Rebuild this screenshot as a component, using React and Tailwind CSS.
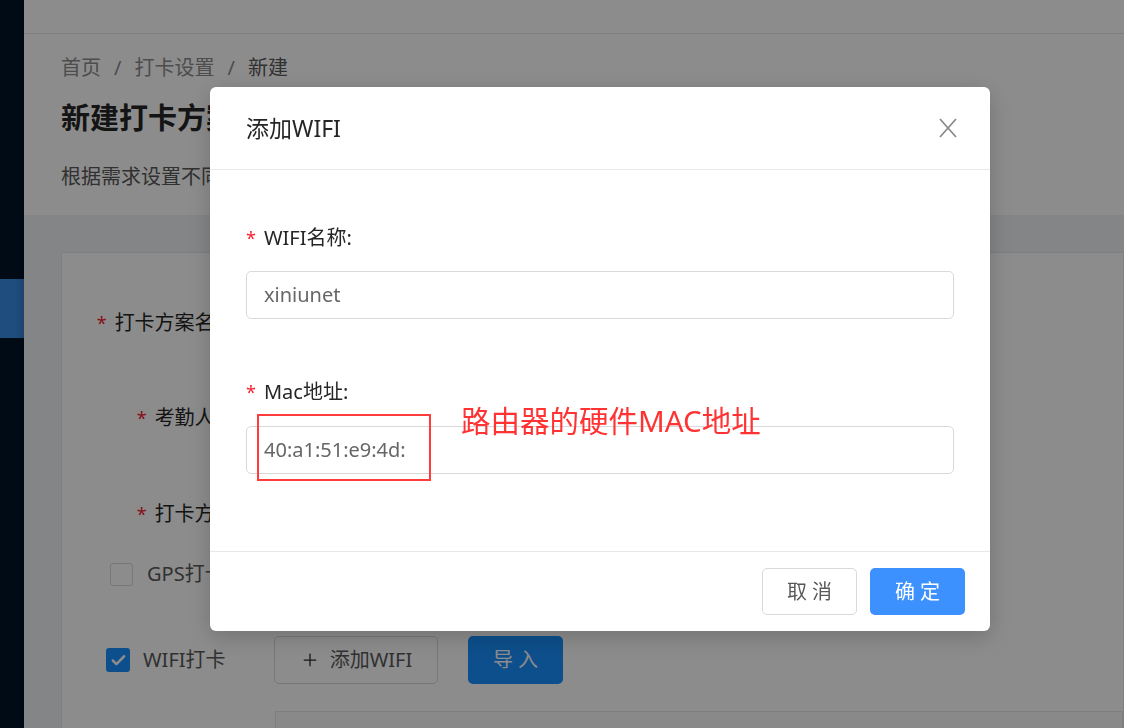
import { Check, Plus } from "lucide-react";

const FONT = { fontFamily: '"Noto Sans", "Noto Sans CJK SC", sans-serif' };

const Req = () => <span className="text-[#f5222d] mr-[8px] text-[18px]">*</span>;

const FormRow = ({ label, height }) => (
  <div className={`flex items-center ${height}`}>
    <div className="w-[182px] text-right text-[20px] text-[#262626] pr-[4px]">
      <Req />
      {label}:
    </div>
    <div className="ml-[26px] w-[600px] h-[48px] border border-[#d9d9d9] rounded-[5px]" />
  </div>
);

const Background = () => (
  <div className="flex h-[728px] overflow-hidden bg-[#f0f2f5]">
    {/* Sidebar */}
    <aside className="w-[24px] shrink-0 bg-[#001529] flex flex-col">
      <div className="h-[279px]" />
      <div className="h-[59px] bg-[#3a8ee6]" />
    </aside>

    <main className="flex-1 flex flex-col shadow-[-4px_0_8px_rgba(0,0,0,0.15)]">
      <header className="h-[34px] bg-white border-b border-[#e8e8e8] shrink-0" />

      <section className="bg-white px-[37px] pt-[20px] pb-[24px] shrink-0">
        <div className="h-[28px] leading-[28px] text-[20px] text-[#8c8c8c] flex gap-[13px]">
          <span>首页</span>
          <span>/</span>
          <span>打卡设置</span>
          <span>/</span>
          <span className="text-[#595959]">新建</span>
        </div>
        <h1 className="mt-[16px] leading-[40px] text-[29px] font-bold text-[#262626]">新建打卡方案</h1>
        <p className="mt-[25px] leading-[28px] text-[20px] text-[#595959]">根据需求设置不同的打卡方案</p>
      </section>

      <section className="pl-[37px] pt-[37px] flex-1">
        <div className="bg-white border border-[#e8e8e8] h-full pt-[56px]">
          <FormRow label="打卡方案名称" height="h-[28px]" />
          <div className="h-[67px]" />
          <FormRow label="考勤人员" height="h-[28px]" />
          <div className="h-[68px]" />
          <FormRow label="打卡方式" height="h-[28px]" />

          <div className="mt-[34px] flex items-center pl-[48px] h-[24px]">
            <span className="w-[23px] h-[23px] border border-[#d9d9d9] rounded-[3px] bg-white" />
            <span className="ml-[14px] text-[20px] text-[#595959]">GPS打卡</span>
          </div>

          <div className="mt-[50px] flex items-center h-[48px] pl-[44px]">
            <span className="w-[24px] h-[24px] rounded-[3px] bg-[#1890ff] flex items-center justify-center">
              <Check size={17} strokeWidth={3.5} className="text-white" />
            </span>
            <span className="ml-[13px] text-[20px] text-[#595959] w-[131px]">WIFI打卡</span>
            <button className="w-[164px] h-[48px] border border-[#d9d9d9] rounded-[5px] flex items-center justify-center gap-[10px] text-[20px] text-[#595959] bg-white">
              <Plus size={20} strokeWidth={1.5} className="text-[#262626]" />
              添加WIFI
            </button>
            <button className="ml-[30px] w-[95px] h-[48px] rounded-[5px] bg-[#1890ff] text-white text-[20px]">导 入</button>
          </div>

          <div className="mt-[27px] ml-[213px] h-[60px] bg-[#fafafa] border border-[#e8e8e8]" />
        </div>
      </section>
    </main>
  </div>
);

const Modal = () => (
  <div className="fixed left-[210px] top-[87px] w-[780px] bg-white rounded-[6px] shadow-[0_6px_24px_rgba(0,0,0,0.2)]">
    <div className="h-[83px] px-[36px] flex items-center justify-between border-b border-[#e8e8e8]">
      <span className="text-[23px] text-[#262626]">添加WIFI</span>
      <svg width="18" height="20" viewBox="0 0 18 20" className="mr-[-3px]">
        <path d="M1 1 L17 19 M17 1 L1 19" stroke="#8c8c8c" strokeWidth="1.8" fill="none" />
      </svg>
    </div>

    <div className="relative px-[36px] pt-[54px] pb-[77px]">
      <div className="h-[28px] flex items-center text-[20px] text-[#262626]">
        <Req />
        WIFI名称:
      </div>
      <div className="mt-[19px] h-[48px] border border-[#d9d9d9] rounded-[5px] flex items-center px-[17px] text-[20px] text-[#666666]">
        xiniunet
      </div>

      <div className="mt-[59px] h-[28px] flex items-center text-[20px] text-[#262626]">
        <Req />
        Mac地址:
      </div>
      <div className="mt-[20px] h-[48px] border border-[#d9d9d9] rounded-[5px] flex items-center px-[17px] text-[20px] text-[#666666]">
        40:a1:51:e9:4d:
      </div>

      {/* annotation */}
      <div className="absolute left-[47px] top-[244px] w-[174px] h-[67px] border-2 border-[#ff3b3b]" />
      <div className="absolute left-[251px] top-[231px] text-[29.5px] leading-[40px] text-[#ff3333]">路由器的硬件MAC地址</div>
    </div>

    <div className="border-t border-[#e8e8e8] py-[16px] px-[25px] flex justify-end gap-[13px]">
      <button className="w-[95px] h-[47px] rounded-[5px] border border-[#d9d9d9] bg-white text-[20px] text-[#595959]">取 消</button>
      <button className="w-[95px] h-[47px] rounded-[5px] bg-[#3d91ff] text-[20px] text-white">确 定</button>
    </div>
  </div>
);

export default function App() {
  return (
    <div className="relative w-[1124px] h-[728px] overflow-hidden" style={FONT}>
      <Background />
      <div className="fixed inset-0 bg-black/45" />
      <Modal />
    </div>
  );
}
